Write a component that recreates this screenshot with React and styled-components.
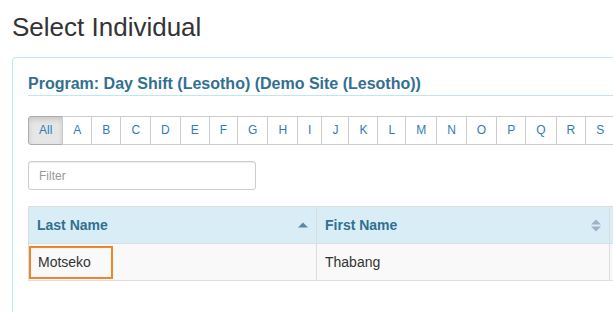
import React from "react";
import styled, { createGlobalStyle } from "styled-components";

const Global = createGlobalStyle`
  html, body { margin: 0; padding: 0; background: #fff; overflow: hidden; }
  body { font-family: "Liberation Sans", Arial, Helvetica, sans-serif; color: #333; font-size: 14px; }
  * { box-sizing: border-box; }
`;

const Page = styled.div`
  padding: 12px 0 0 12px;
  width: 1100px;
`;

const Title = styled.h1`
  margin: 0 0 15px 0;
  font-size: 26px;
  line-height: 30px;
  font-weight: 400;
  color: #333;
`;

const Panel = styled.div`
  border: 1px solid #bce8f1;
  border-radius: 4px;
  padding: 15px 15px 40px 15px;
  width: 1000px;
`;

const ProgramHeading = styled.h4`
  margin: 0 0 20px 0;
  font-size: 16px;
  line-height: 22px;
  font-weight: 700;
  color: #31708f;
  border-bottom: 1px solid #bce8f1;
`;

const LetterGroup = styled.div`
  display: flex;
  margin-bottom: 16px;
`;

const LetterButton = styled.button`
  font-family: inherit;
  font-size: 12px;
  line-height: 17px;
  padding: 5px 10px;
  border: 1px solid ${(p) => (p.$active ? "#adadad" : "#ccc")};
  background: ${(p) => (p.$active ? "#e6e6e6" : "#fff")};
  box-shadow: ${(p) => (p.$active ? "inset 0 3px 5px rgba(0,0,0,.125)" : "none")};
  color: #337ab7;
  margin-left: -1px;
  border-radius: 0;
  cursor: pointer;
  &:first-child {
    margin-left: 0;
    border-radius: 3px 0 0 3px;
  }
`;

const FilterInput = styled.input`
  display: block;
  width: 228px;
  height: 29px;
  padding: 5px 10px;
  font-family: inherit;
  font-size: 12px;
  border: 1px solid #ccc;
  border-radius: 3px;
  box-shadow: inset 0 1px 1px rgba(0,0,0,.075);
  margin-bottom: 16px;
  color: #555;
  &::placeholder { color: #999; }
`;

const Table = styled.table`
  border-collapse: collapse;
  border: 1px solid #ddd;
  table-layout: fixed;
`;

const HeadCell = styled.th`
  width: ${(p) => p.$w}px;
  background: #d9edf7;
  color: #31708f;
  font-size: 14px;
  font-weight: 700;
  text-align: left;
  padding: 8px;
  line-height: 20px;
  border: 1px solid #ddd;
`;

const HeadInner = styled.div`
  display: flex;
  align-items: center;
  justify-content: space-between;
`;

const Row = styled.tr`
  background: #f9f9f9;
`;

const Cell = styled.td`
  padding: ${(p) => (p.$focus ? "0" : "8px")};
  line-height: 20px;
  font-size: 14px;
  color: #333;
  border: 1px solid #ddd;
  vertical-align: top;
`;

const FocusMark = styled.div`
  width: 84px;
  height: 33px;
  margin: 2px 0 1px 0;
  border: 2px solid #f0862a;
  padding-left: 7px;
  line-height: 29px;
`;

const SortAsc = () => (
  <svg width="10" height="6" viewBox="0 0 10 6">
    <path d="M0 5.5 L5 0.5 L10 5.5 Z" fill="#5a87a6" />
  </svg>
);

const SortBoth = () => (
  <svg width="10" height="13" viewBox="0 0 10 13">
    <path d="M0 5.5 L5 0.5 L10 5.5 Z" fill="#9db4c6" />
    <path d="M0 7.5 L5 12.5 L10 7.5 Z" fill="#9db4c6" />
  </svg>
);

const letters = ["All", ..."ABCDEFGHIJKLMNOPQRSTUVWXYZ".split("")];

export default function App() {
  return (
    <>
      <Global />
      <Page>
        <Title>Select Individual</Title>
        <Panel>
          <ProgramHeading>Program: Day Shift (Lesotho) (Demo Site (Lesotho))</ProgramHeading>
          <LetterGroup>
            {letters.map((l) => (
              <LetterButton key={l} $active={l === "All"}>{l}</LetterButton>
            ))}
          </LetterGroup>
          <FilterInput placeholder="Filter" />
          <Table>
            <thead>
              <tr>
                <HeadCell $w={288}>
                  <HeadInner>Last Name<SortAsc /></HeadInner>
                </HeadCell>
                <HeadCell $w={293}>
                  <HeadInner>First Name<SortBoth /></HeadInner>
                </HeadCell>
                <HeadCell $w={250}>
                  <HeadInner>Date of Birth<SortBoth /></HeadInner>
                </HeadCell>
              </tr>
            </thead>
            <tbody>
              <Row>
                <Cell $focus>
                  <FocusMark>Motseko</FocusMark>
                </Cell>
                <Cell>Thabang</Cell>
                <Cell></Cell>
              </Row>
            </tbody>
          </Table>
        </Panel>
      </Page>
    </>
  );
}
